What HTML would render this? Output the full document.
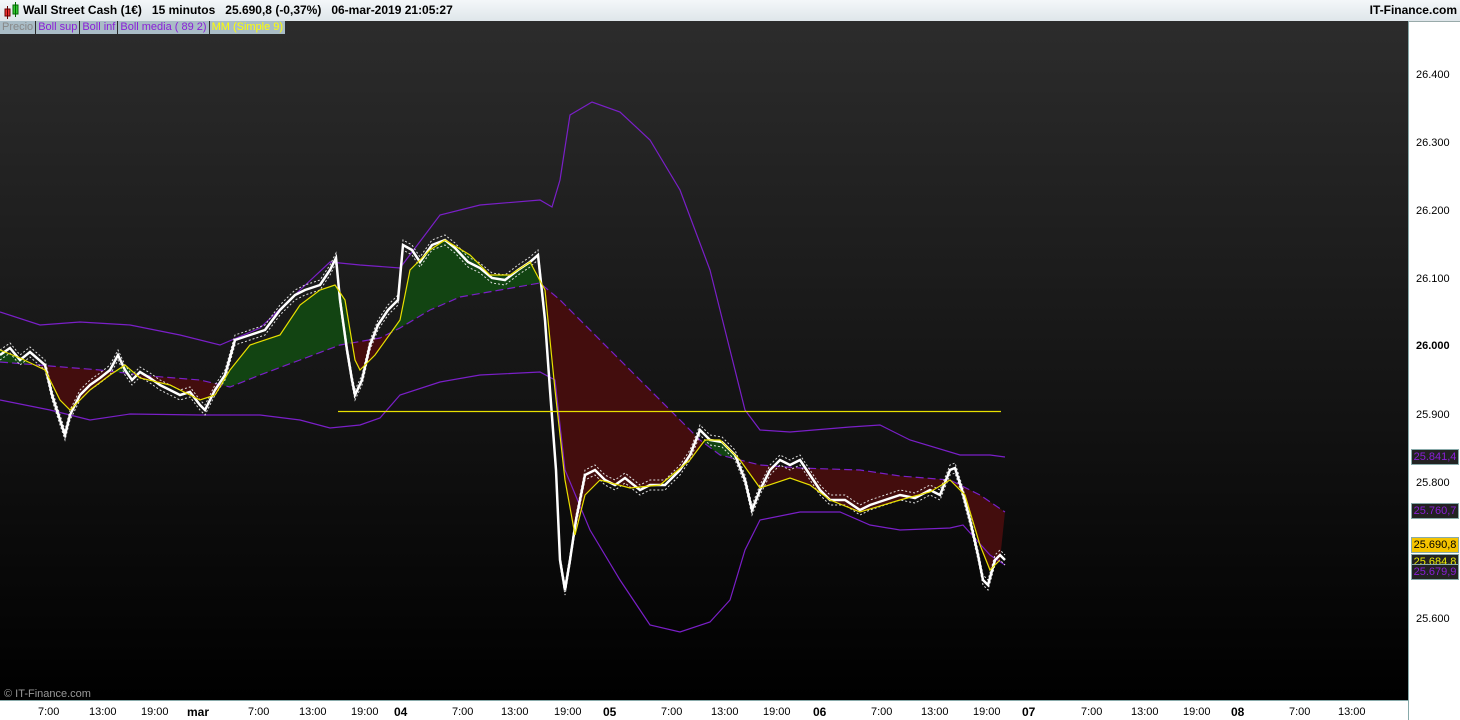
<!DOCTYPE html><html><head><style>
body{margin:0;width:1460px;height:720px;overflow:hidden;font-family:"Liberation Sans",sans-serif;background:#fff;position:relative}
.hdr{position:absolute;left:0;top:0;width:1460px;height:21px;background:linear-gradient(#f4f7f9,#dfe6ea);border-bottom:1px solid #9aa;font-size:12px;font-weight:bold;line-height:21px}
.leg{position:absolute;top:21px;left:0;height:13px;font-size:11px;line-height:13px;display:flex}
.leg span{background:#a9bcc6;margin-right:1px;padding:0 2px}
.ax{position:absolute;font-size:11px;color:#000}
.yl{position:absolute;left:1416px;font-size:11px}
.box{position:absolute;left:1411px;width:46px;height:14px;font-size:11px;line-height:14px;text-align:center;border:1px solid #8aa}
</style></head><body>
<div class="hdr"><svg width="16" height="18" style="position:absolute;left:4px;top:2px"><rect x="1" y="7" width="5" height="7" fill="#e33" stroke="#600"/><line x1="3.5" y1="4" x2="3.5" y2="17" stroke="#600"/><rect x="9" y="3" width="5" height="9" fill="#3c3" stroke="#060"/><line x1="11.5" y1="0" x2="11.5" y2="15" stroke="#060"/></svg>
<span style="position:absolute;left:23px">Wall Street Cash (1€)&nbsp;&nbsp;&nbsp;15 minutos&nbsp;&nbsp;&nbsp;25.690,8 (-0,37%)&nbsp;&nbsp;&nbsp;06-mar-2019 21:05:27</span>
<span style="position:absolute;right:3px">IT-Finance.com</span></div>
<svg width="1408" height="679" style="position:absolute;left:0;top:21px" viewBox="0 21 1408 679">
<defs><linearGradient id="bg" x1="0" y1="0" x2="0" y2="1"><stop offset="0" stop-color="#2c2c2c"/><stop offset="1" stop-color="#000"/></linearGradient>
<clipPath id="above"><path d="M0,0 L0,362 50,366 100,370 150,376 200,380 230,387 260,375 300,360 340,345 380,338 400,328 430,310 460,297 500,290 540,283 560,300 600,340 640,380 680,420 700,440 720,455 760,465 800,468 860,470 900,476 950,480 980,495 1005,512 1408,512 1408,0Z"/></clipPath>
<clipPath id="below"><path d="M0,720 L0,362 50,366 100,370 150,376 200,380 230,387 260,375 300,360 340,345 380,338 400,328 430,310 460,297 500,290 540,283 560,300 600,340 640,380 680,420 700,440 720,455 760,465 800,468 860,470 900,476 950,480 980,495 1005,512 1408,512 1408,720Z"/></clipPath>
<polyline id="pr" fill="none" points="0,355 10,348 20,360 30,352 45,365 52,395 60,420 65,435 70,415 80,395 90,385 100,378 110,370 118,355 125,370 132,380 140,372 150,378 160,385 170,390 180,395 190,392 200,405 205,410 215,390 225,375 235,340 250,335 265,330 280,310 295,295 305,290 320,285 330,270 336,258 340,300 347,350 352,380 355,395 362,380 370,345 378,325 388,310 398,300 403,245 412,250 420,262 432,245 445,240 455,248 468,262 480,268 492,278 505,280 518,270 530,262 538,255 545,320 550,390 556,470 560,560 565,590 570,560 576,520 585,475 595,470 605,480 615,485 625,478 640,490 650,485 665,485 680,470 690,455 700,430 710,440 722,442 735,455 745,480 752,510 760,490 770,470 780,460 790,465 800,460 810,475 820,490 830,500 845,500 860,510 870,505 885,500 900,495 915,498 930,490 940,495 950,470 955,468 962,490 970,520 978,555 983,580 988,585 995,560 1000,555 1005,560"/>
</defs>
<rect x="0" y="21" width="1408" height="679" fill="url(#bg)"/>
<path d="M0,350 20,358 45,370 60,400 70,410 90,390 110,375 125,365 140,378 170,385 200,400 215,395 230,370 250,345 280,335 300,305 320,290 335,285 345,300 355,360 360,370 375,355 400,320 410,270 430,250 445,240 470,255 490,275 510,275 530,262 545,290 555,390 565,480 575,535 585,495 600,480 630,488 660,485 690,460 705,440 720,440 740,460 760,488 790,478 810,485 830,500 860,512 900,500 930,492 950,480 965,495 980,545 990,570 1000,560 1005,512 980,495 950,480 900,476 860,470 800,468 760,465 720,455 700,440 680,420 640,380 600,340 560,300 540,283 500,290 460,297 430,310 400,328 380,338 340,345 300,360 260,375 230,387 200,380 150,376 100,370 50,366 0,362Z" fill="#124412" clip-path="url(#above)"/>
<path d="M0,350 20,358 45,370 60,400 70,410 90,390 110,375 125,365 140,378 170,385 200,400 215,395 230,370 250,345 280,335 300,305 320,290 335,285 345,300 355,360 360,370 375,355 400,320 410,270 430,250 445,240 470,255 490,275 510,275 530,262 545,290 555,390 565,480 575,535 585,495 600,480 630,488 660,485 690,460 705,440 720,440 740,460 760,488 790,478 810,485 830,500 860,512 900,500 930,492 950,480 965,495 980,545 990,570 1000,560 1005,512 980,495 950,480 900,476 860,470 800,468 760,465 720,455 700,440 680,420 640,380 600,340 560,300 540,283 500,290 460,297 430,310 400,328 380,338 340,345 300,360 260,375 230,387 200,380 150,376 100,370 50,366 0,362Z" fill="#430d0d" clip-path="url(#below)"/>
<g fill="none" stroke="#7a1fc8" stroke-width="1.2">
<polyline points="0,312 40,325 80,322 130,325 180,335 220,345 260,328 300,290 330,262 360,265 400,268 440,215 480,205 540,200 552,207 560,180 570,115 592,102 620,112 650,140 680,190 710,270 730,350 745,410 760,430 790,432 850,427 880,425 910,440 960,455 990,455 1005,457"/>
<polyline points="0,400 50,410 90,420 130,414 200,415 260,415 300,420 330,428 360,425 380,418 400,395 440,382 480,375 540,372 555,380 565,470 590,530 620,580 650,625 680,632 710,622 730,600 745,550 760,520 800,512 840,512 870,525 900,530 950,528 963,525 990,555 1005,565"/>
<polyline stroke-dasharray="8,4" points="0,362 50,366 100,370 150,376 200,380 230,387 260,375 300,360 340,345 380,338 400,328 430,310 460,297 500,290 540,283 560,300 600,340 640,380 680,420 700,440 720,455 760,465 800,468 860,470 900,476 950,480 980,495 1005,512"/>
</g>
<use href="#pr" stroke="#ddd" stroke-width="1" transform="translate(0,-5)" stroke-dasharray="2,2"/>
<use href="#pr" stroke="#ddd" stroke-width="1" transform="translate(0,5)" stroke-dasharray="2,2"/>
<use href="#pr" stroke="#fff" stroke-width="2.5"/>
<polyline fill="none" stroke="#e8e000" stroke-width="1.2" points="0,350 20,358 45,370 60,400 70,410 90,390 110,375 125,365 140,378 170,385 200,400 215,395 230,370 250,345 280,335 300,305 320,290 335,285 345,300 355,360 360,370 375,355 400,320 410,270 430,250 445,240 470,255 490,275 510,275 530,262 545,290 555,390 565,480 575,535 585,495 600,480 630,488 660,485 690,460 705,440 720,440 740,460 760,488 790,478 810,485 830,500 860,512 900,500 930,492 950,480 965,495 980,545 990,570 1000,560"/>
<line x1="338" y1="411.5" x2="1001" y2="411.5" stroke="#e8e000" stroke-width="1.2"/>
<text x="4" y="697" fill="#999" font-size="11" font-family="Liberation Sans">© IT-Finance.com</text>
</svg>
<div class="leg"><span style="color:#888">Precio</span><span style="color:#8a1ed8">Boll sup</span><span style="color:#8a1ed8">Boll inf</span><span style="color:#8a1ed8">Boll media ( 89 2)</span><span style="color:#ff0">MM (Simple 9)</span></div>
<div style="position:absolute;left:1408px;top:21px;width:1px;height:699px;background:#8aa"></div>
<div style="position:absolute;left:0;top:700px;width:1408px;height:1px;background:#8aa"></div>
<div class="yl" style="top:69px">26.400</div><div class="yl" style="top:137px">26.300</div><div class="yl" style="top:205px">26.200</div><div class="yl" style="top:273px">26.100</div><div class="yl" style="top:340px;font-weight:bold">26.000</div><div class="yl" style="top:409px">25.900</div><div class="yl" style="top:477px">25.800</div><div class="yl" style="top:613px">25.600</div>
<div class="box" style="top:449px;background:#222;color:#8a1ed8">25.841,4</div>
<div class="box" style="top:503px;background:#222;color:#8a1ed8">25.760,7</div>
<div class="box" style="top:537px;background:#f5c400;color:#000">25.690,8</div>
<div class="box" style="top:554px;background:#222;color:#ee0">25.684,8</div>
<div class="box" style="top:564px;background:#222;color:#8a1ed8">25.679,9</div>
<div class="ax" style="left:38px;top:706px">7:00</div><div class="ax" style="left:89px;top:706px">13:00</div><div class="ax" style="left:141px;top:706px">19:00</div><div class="ax" style="left:187px;top:705px;font-weight:bold;font-size:12px">mar</div>
<div class="ax" style="left:248px;top:706px">7:00</div><div class="ax" style="left:299px;top:706px">13:00</div><div class="ax" style="left:351px;top:706px">19:00</div><div class="ax" style="left:394px;top:705px;font-weight:bold;font-size:12px">04</div>
<div class="ax" style="left:452px;top:706px">7:00</div><div class="ax" style="left:501px;top:706px">13:00</div><div class="ax" style="left:554px;top:706px">19:00</div><div class="ax" style="left:603px;top:705px;font-weight:bold;font-size:12px">05</div>
<div class="ax" style="left:661px;top:706px">7:00</div><div class="ax" style="left:711px;top:706px">13:00</div><div class="ax" style="left:763px;top:706px">19:00</div><div class="ax" style="left:813px;top:705px;font-weight:bold;font-size:12px">06</div>
<div class="ax" style="left:871px;top:706px">7:00</div><div class="ax" style="left:921px;top:706px">13:00</div><div class="ax" style="left:973px;top:706px">19:00</div><div class="ax" style="left:1022px;top:705px;font-weight:bold;font-size:12px">07</div>
<div class="ax" style="left:1081px;top:706px">7:00</div><div class="ax" style="left:1131px;top:706px">13:00</div><div class="ax" style="left:1183px;top:706px">19:00</div><div class="ax" style="left:1231px;top:705px;font-weight:bold;font-size:12px">08</div>
<div class="ax" style="left:1289px;top:706px">7:00</div><div class="ax" style="left:1338px;top:706px">13:00</div>
</body></html>
